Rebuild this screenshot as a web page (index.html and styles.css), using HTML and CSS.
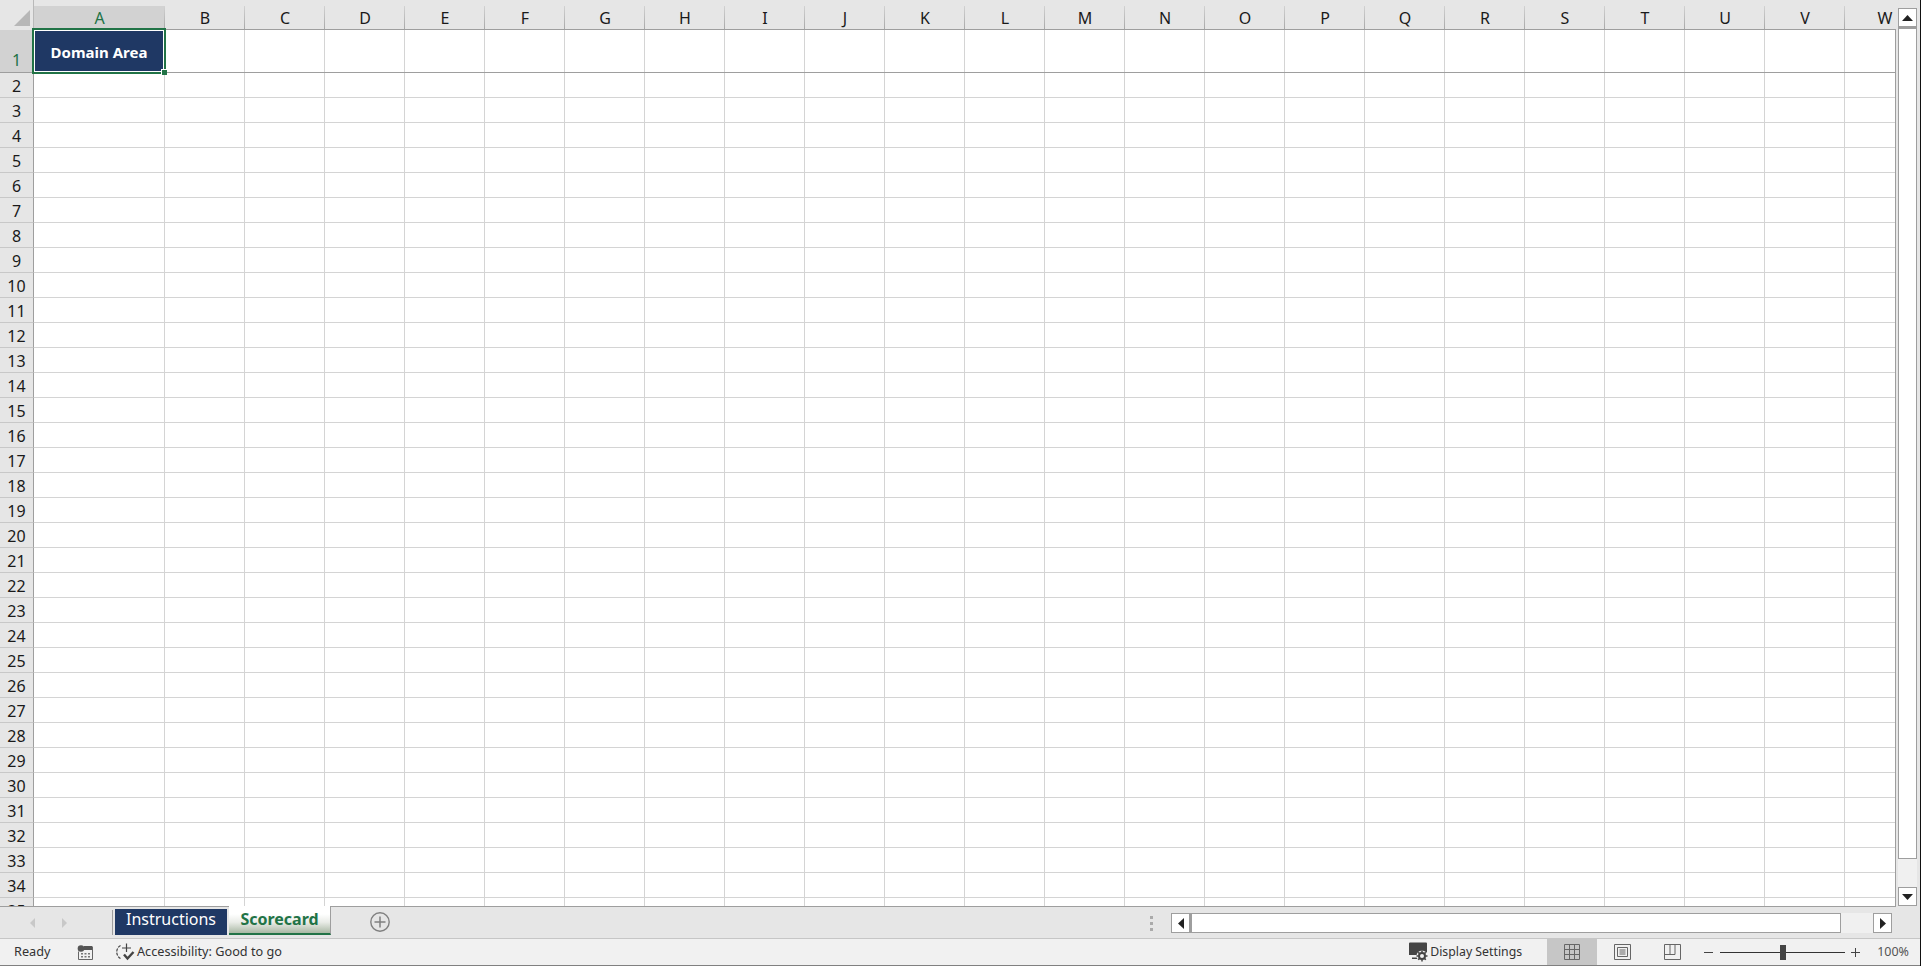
FILE: index.html
```html
<!DOCTYPE html>
<html lang="en">
<head>
<meta charset="utf-8">
<title>Scorecard</title>
<link rel="stylesheet" href="styles.css">
</head>
<body>
<main class="app">
  <section class="sheet">
    <div class="grid">
      <div class="col-heads">
        <div class="corner"><span class="corner-mark"></span></div>
        <div class="col col-a">A</div>
        <div class="col">B</div><div class="col">C</div><div class="col">D</div><div class="col">E</div>
        <div class="col">F</div><div class="col">G</div><div class="col">H</div><div class="col">I</div>
        <div class="col">J</div><div class="col">K</div><div class="col">L</div><div class="col">M</div>
        <div class="col">N</div><div class="col">O</div><div class="col">P</div><div class="col">Q</div>
        <div class="col">R</div><div class="col">S</div><div class="col">T</div><div class="col">U</div>
        <div class="col">V</div><div class="col">W</div>
      </div>
      <div class="row-frozen">
        <div class="row-head row-head-active">1</div>
        <div class="frozen-cells">
          <div class="cell-active">Domain Area<span class="fill-handle"></span></div>
        </div>
      </div>
      <div class="grid-body">
        <div class="row-heads">
          <div class="row-head">2</div><div class="row-head">3</div><div class="row-head">4</div><div class="row-head">5</div>
          <div class="row-head">6</div><div class="row-head">7</div><div class="row-head">8</div><div class="row-head">9</div>
          <div class="row-head">10</div><div class="row-head">11</div><div class="row-head">12</div><div class="row-head">13</div>
          <div class="row-head">14</div><div class="row-head">15</div><div class="row-head">16</div><div class="row-head">17</div>
          <div class="row-head">18</div><div class="row-head">19</div><div class="row-head">20</div><div class="row-head">21</div>
          <div class="row-head">22</div><div class="row-head">23</div><div class="row-head">24</div><div class="row-head">25</div>
          <div class="row-head">26</div><div class="row-head">27</div><div class="row-head">28</div><div class="row-head">29</div>
          <div class="row-head">30</div><div class="row-head">31</div><div class="row-head">32</div><div class="row-head">33</div>
          <div class="row-head">34</div><div class="row-head">35</div>
        </div>
        <div class="cells"></div>
      </div>
    </div>
    <div class="vscroll">
      <button class="sb-btn" aria-label="Scroll up"><svg width="11" height="6" viewBox="0 0 11 6"><path d="M5.500 0 11 6H0z" fill="#222"/></svg></button>
      <div class="vthumb"></div>
      <div class="vtrack"></div>
      <button class="sb-btn" aria-label="Scroll down"><svg width="11" height="6" viewBox="0 0 11 6"><path d="M0 0h11L5.500 6z" fill="#222"/></svg></button>
    </div>
  </section>

  <nav class="tabbar">
    <div class="tab-nav">
      <svg width="5" height="10" viewBox="0 0 5 10"><path d="M5 0v10L0 5z" fill="#c8c8c8"/></svg>
      <svg width="5" height="10" viewBox="0 0 5 10"><path d="M0 0v10l5-5z" fill="#c8c8c8"/></svg>
    </div>
    <div class="tab tab-blue">Instructions</div>
    <div class="tab tab-current">Scorecard</div>
    <button class="tab-add" aria-label="New sheet"><svg width="20" height="20" viewBox="0 0 20 20" fill="none" stroke="#808080"><circle cx="10" cy="10" r="9.200" stroke-width="1.400"/><path d="M10 4.500v11M4.500 10h11" stroke-width="1.500"/></svg></button>
    <div class="split-dots"><i></i><i></i><i></i></div>
    <div class="hscroll">
      <button class="sb-btn sb-btn-h" aria-label="Scroll left"><svg width="6" height="11" viewBox="0 0 6 11"><path d="M6 0v11L0 5.500z" fill="#222"/></svg></button>
      <div class="hthumb"></div>
      <div class="htrack"></div>
      <button class="sb-btn sb-btn-h" aria-label="Scroll right"><svg width="6" height="11" viewBox="0 0 6 11"><path d="M0 0v11l6-5.500z" fill="#222"/></svg></button>
    </div>
  </nav>

  <footer class="status">
    <span class="ready status-text">Ready</span>
    <svg class="macro-icon" width="16" height="15" viewBox="0 0 16 15">
      <circle cx="4" cy="3.500" r="3.300" fill="#555"/>
      <path d="M7 1h8v4H7z" fill="#555"/>
      <path d="M1.500 6.500v8h14v-13" fill="none" stroke="#666"/>
      <path d="M4 8h2v1.500H4zM7.500 8h2v1.500h-2zM11 8h2v1.500h-2zM4 11h2v1.500H4zM7.500 11h2v1.500h-2zM11 11h2v1.500h-2z" fill="#777"/>
    </svg>
    <svg class="a11y-icon" width="20" height="18" viewBox="0 0 20 18" fill="none" stroke="#444" stroke-width="1.200">
      <path d="M5.500 2.500A7.500 7.500 0 0 0 5.500 15.500" stroke-dasharray="3 1.200"/>
      <path d="M7 5h9M11.500 .5v8.500"/>
      <path d="M9 11.500l3.500 4 6-6.500" stroke-width="2.400"/>
    </svg>
    <span class="a11y-text status-text">Accessibility: Good to go</span>
    <div class="status-right">
      <svg class="display-icon" width="20" height="20" viewBox="0 0 20 20">
        <path d="M1 1.500a1 1 0 0 1 1-1h16a1 1 0 0 1 1 1v9H1z" fill="#444"/>
        <path d="M1 10h10v3H1z" fill="#444"/><path d="M4 15.500h6V17H4z" fill="#444"/>
        <circle cx="14" cy="14" r="5.500" fill="#f1f1f1"/>
        <circle cx="14" cy="14" r="3" fill="none" stroke="#444" stroke-width="2"/>
        <path d="M14 8.500v2M14 17.500v2M8.500 14h2M17.500 14h2M10.200 10.200l1.400 1.400M16.400 16.400l1.400 1.400M10.200 17.800l1.400-1.400M16.400 11.600l1.400-1.400" stroke="#444" stroke-width="1.500"/>
      </svg>
      <span class="display-text status-text">Display Settings</span>
      <div class="view view-on">
        <svg width="16" height="16" viewBox="0 0 16 16" fill="none" stroke="#666"><path d="M.5.500h15v15H.5zM5.500.500v15M10.500.500v15M.5 5.500h15M.5 10.500h15"/></svg>
      </div>
      <div class="view">
        <svg width="17" height="16" viewBox="0 0 17 16" fill="none" stroke="#666"><path d="M.5.500h16v15H.5z"/><path d="M3.500 3.500h10v9h-10zM5.500 6h6M5.500 8h6M5.500 10h6"/></svg>
      </div>
      <div class="view">
        <svg width="17" height="16" viewBox="0 0 17 16" fill="none" stroke="#666"><path d="M.5.500h16v15H.5zM.5 10.500h10.500V.5M6 .5v10"/></svg>
      </div>
      <div class="zoom">
        <span class="zoom-minus"></span>
        <div class="slider"><span class="slider-thumb"></span></div>
        <span class="zoom-plus"></span>
        <span class="zoom-value status-text">100%</span>
      </div>
    </div>
  </footer>
</main>
</body>
</html>
```
FILE: styles.css
```css
* { box-sizing: border-box; }
html, body { margin: 0; padding: 0; background: #fff; }
.app {
  width: 1921px;
  height: 966px;
  display: flex;
  flex-direction: column;
  overflow: hidden;
  border-right: 1px solid #111;
  font-family: "Noto Sans", "Open Sans", sans-serif;
  color: #222;
}
.sheet {
  flex: 0 0 907px;
  height: 907px;
  min-height: 0;
  overflow: hidden;
  display: flex;
  background: #e6e6e6;
}
.grid {
  width: 1896px;
  min-height: 0;
  display: flex;
  flex-direction: column;
  overflow: hidden;
  border-bottom: 1px solid #9e9e9e;
}
.col-heads {
  flex: 0 0 30px;
  display: flex;
  background: #e6e6e6;
}
.corner {
  flex: 0 0 34px;
  position: relative;
  border-right: 1px solid #b9b9b9;
}
.corner-mark {
  position: absolute;
  left: 14px;
  top: 10px;
  width: 16px;
  height: 16px;
  background: #b7b7b7;
  clip-path: polygon(100% 0, 100% 100%, 0 100%);
}
.col {
  flex: 0 0 80px;
  position: relative;
  padding-top: 7px;
  border-bottom: 1px solid #9e9e9e;
  font-size: 16px;
  line-height: 22px;
  text-align: center;
  color: #1a1a1a;
}
.col::after {
  content: "";
  position: absolute;
  right: 0;
  top: 6px;
  bottom: 0;
  width: 1px;
  background: linear-gradient(#d2d2d2, #a8a8a8);
}
.col-a {
  flex-basis: 131px;
  background: linear-gradient(#d2d2d2, #d2d2d2) 0 6px no-repeat;
  color: #217346;
}
.row-frozen {
  flex: 0 0 43px;
  display: flex;
}
.row-head {
  flex: 0 0 25px;
  width: 34px;
  height: 25px;
  border-right: 1px solid #9e9e9e;
  border-bottom: 1px solid #c8c8c8;
  font-size: 16px;
  line-height: 26px;
  text-align: center;
  color: #1a1a1a;
  background: #e6e6e6;
}
.row-head-active {
  flex: 0 0 34px;
  height: 43px;
  line-height: 61px;
  background: #d2d2d2;
  color: #217346;
  border-bottom-color: #9e9e9e;
  overflow: hidden;
}
.frozen-cells {
  flex: 1;
  position: relative;
  border-right: 1px solid #9e9e9e;
  border-bottom: 1px solid #9e9e9e;
  padding-left: 130px;
  background-color: #fff;
  background-image: linear-gradient(90deg, #d4d4d4 1px, transparent 1px);
  background-size: 80px 100%;
  background-origin: content-box;
  background-clip: content-box;
}
.cell-active {
  position: absolute;
  left: 0;
  top: 0;
  width: 130px;
  height: 42px;
  background: #1f3864;
  outline: 2px solid #217346;
  box-shadow: inset 0 0 0 1px #fff;
  color: #fff;
  font-weight: 700;
  font-size: 15px;
  line-height: 44px;
  text-align: center;
}
.fill-handle {
  position: absolute;
  right: -3px;
  bottom: -3px;
  width: 6px;
  height: 6px;
  background: #217346;
  border-top: 1px solid #fff;
  border-left: 1px solid #fff;
}
.grid-body {
  flex: 1;
  display: flex;
  min-height: 0;
  overflow: hidden;
}
.row-heads {
  flex: 0 0 34px;
  display: flex;
  flex-direction: column;
}
.cells {
  flex: 1;
  padding-left: 130px;
  border-right: 1px solid #9e9e9e;
  background-color: #fff;
  background-image:
    linear-gradient(90deg, #d4d4d4 1px, transparent 1px),
    linear-gradient(0deg, #d4d4d4 1px, transparent 1px);
  background-size: 80px 100%, 100% 25px;
  background-origin: content-box, border-box;
  background-clip: content-box, border-box;
}
.vscroll {
  flex: 1;
  display: flex;
  flex-direction: column;
  align-items: flex-start;
  padding: 8px 0 1px 2px;
}
.sb-btn {
  flex: 0 0 19px;
  width: 19px;
  height: 19px;
  padding: 0;
  display: flex;
  align-items: center;
  justify-content: center;
  background: #fff;
  border: 1px solid #9e9e9e;
}
.vthumb {
  flex: 0 0 832px;
  width: 19px;
  background: #fff;
  border: 1px solid #9e9e9e;
  border-top-width: 2px;
}
.vtrack { flex: 1; width: 19px; background: #f0f0f0; }
.tabbar {
  flex: 0 0 32px;
  display: flex;
  align-items: flex-start;
  background: #e6e6e6;
  border-bottom: 1px solid #c6c6c6;
}
.tab-nav {
  flex: 0 0 113px;
  height: 25px;
  margin-top: 3px;
  padding: 0 45px 0 30px;
  display: flex;
  align-items: center;
  justify-content: space-between;
  border-right: 1px solid #9e9e9e;
}
.tab {
  text-align: center;
  font-size: 16px;
}
.tab-blue {
  flex: 0 0 112px;
  margin: 2px 0 0 2px;
  height: 26px;
  line-height: 21px;
  background: #1f3864;
  color: #fff;
}
.tab-current {
  flex: 0 0 102px;
  position: relative;
  margin: -1px 0 0 2px;
  height: 29px;
  line-height: 26px;
  font-weight: 700;
  color: #217346;
  background: linear-gradient(#fff 30%, #e9ece7 60%, #a9b8a4);
  border-bottom: 2px solid #217346;
  border-right: 1px solid #9e9e9e;
}
.tab-add {
  flex: 0 0 20px;
  height: 20px;
  margin: 5px 0 0 39px;
  padding: 0;
  border: 0;
  background: none;
}
.split-dots {
  margin: 9px 0 0 760px;
  display: flex;
  flex-direction: column;
  gap: 3px;
}
.split-dots i { display: block; width: 3px; height: 3px; background: #aaa; }
.hscroll {
  margin: 6px 0 0 18px;
  display: flex;
  height: 20px;
}
.sb-btn-h { flex: 0 0 19px; height: 20px; }
.hthumb {
  flex: 0 0 651px;
  background: #fff;
  border: 1px solid #9e9e9e;
  border-left-width: 2px;
}
.htrack { flex: 0 0 32px; background: #f0f0f0; }
.status {
  flex: 1;
  display: flex;
  align-items: center;
  background: #f1f1f1;
  border-bottom: 1px solid #808080;
  font-size: 12.700px;
  color: #333;
}
.status-text { margin-bottom: 2px; }
.ready { margin-left: 14px; width: 63px; }
.a11y-icon { margin-left: 22px; }
.macro-icon { flex: none; }
.a11y-text { margin-left: 2px; }
.status-right {
  margin-left: auto;
  display: flex;
  align-items: center;
  height: 100%;
}
.display-text { margin-left: 2px; margin-right: 25px; font-size: 12.300px; }
.view {
  width: 50px;
  height: 100%;
  display: flex;
  align-items: center;
  justify-content: center;
}
.view-on { background: #c6c6c6; }
.zoom {
  display: flex;
  align-items: center;
  margin-left: 7px;
  margin-right: 11px;
}
.zoom-minus { width: 9px; height: 1px; background: #444; }
.slider {
  position: relative;
  width: 125px;
  height: 1px;
  margin: 0 6px 0 7px;
  background: #333;
}
.slider-thumb {
  position: absolute;
  left: 60px;
  top: -7px;
  width: 6px;
  height: 15px;
  background: #444;
}
.zoom-plus {
  position: relative;
  width: 9px;
  height: 1px;
  background: #444;
}
.zoom-plus::after {
  content: "";
  position: absolute;
  left: 4px;
  top: -4px;
  width: 1px;
  height: 9px;
  background: #444;
}
.zoom-value { margin-left: 17px; font-size: 12.500px; color: #555; }
```
